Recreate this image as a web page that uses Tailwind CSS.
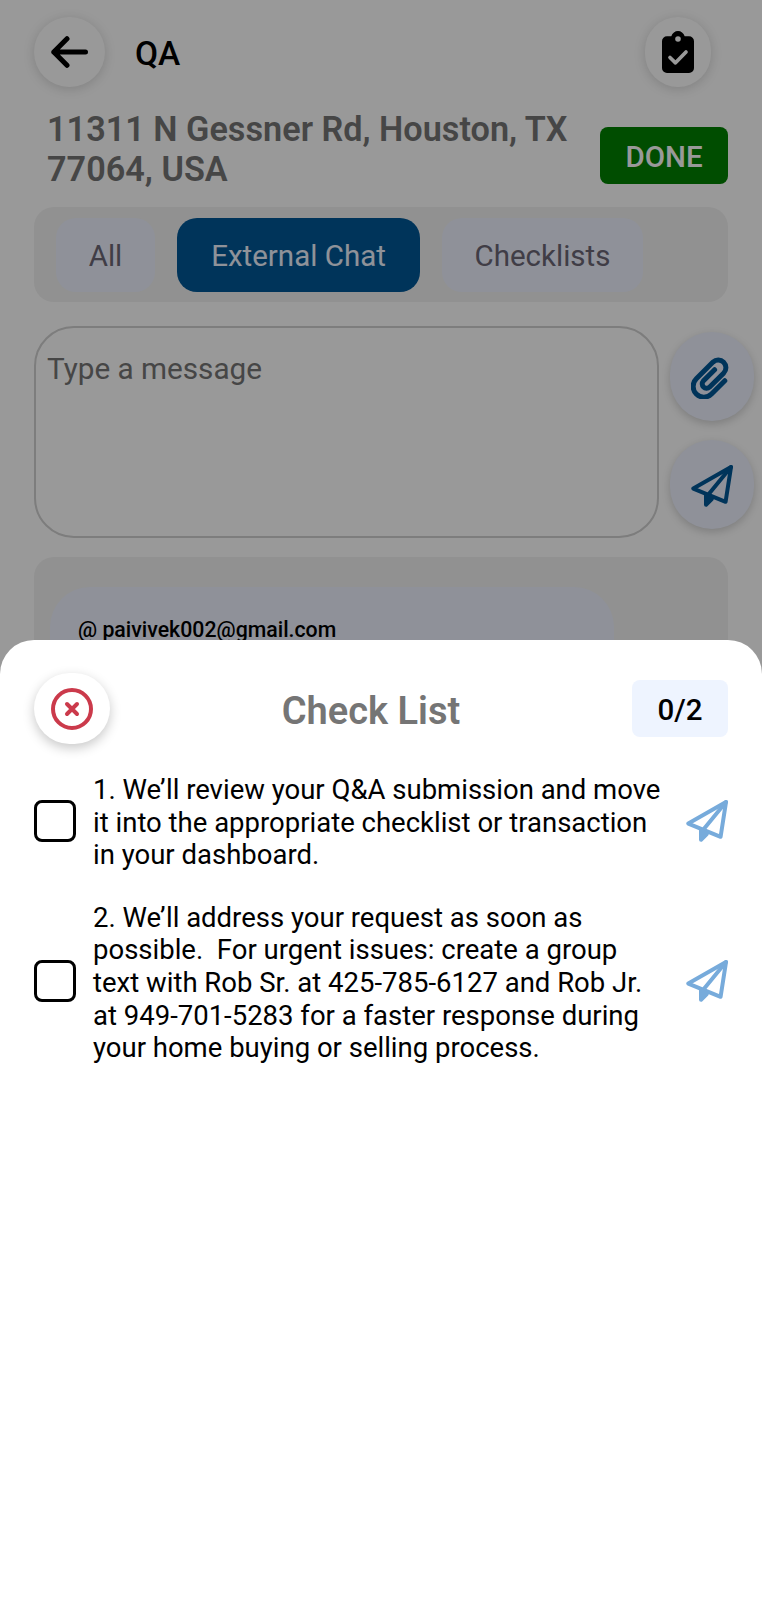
<!DOCTYPE html>
<html lang="en">
<head>
<meta charset="utf-8">
<title>QA</title>
<script src="https://cdn.jsdelivr.net/npm/@tailwindcss/browser@4"></script>
</head>
<body class="bg-white font-[Roboto,sans-serif]">
<svg class="hidden">
  <symbol id="plane" viewBox="0 0 42 42">
    <g fill="none" stroke="currentColor" stroke-width="4" stroke-linejoin="round" stroke-linecap="round">
      <path d="M40 2.100 2.300 23.600 34.600 36.800Z"/>
      <path d="M40 2.100 17 30"/>
      <path fill="currentColor" d="M15 30.500V39.800L20.800 34Z"/>
    </g>
  </symbol>
</svg>
<div class="relative h-[1600px] w-[762px] overflow-hidden">
  <header class="flex items-center px-[34px] pt-[17px]">
    <button class="flex h-[70px] w-[71px] items-center justify-center rounded-full bg-white shadow-[0_2px_12px_rgba(0,0,0,0.16)]">
      <svg class="h-[32px] w-[37px]" viewBox="0 0 37 32" fill="none" stroke="#000" stroke-width="5" stroke-linecap="round" stroke-linejoin="round"><path d="M34.500 16H2.800M16 2.700 2.800 16 16 29.300"/></svg>
    </button>
    <h1 class="ml-[30px] pt-[3px] text-[33.500px] font-medium leading-[40px] text-black">QA</h1>
    <button class="ml-auto mr-[17px] flex h-[70px] w-[66px] items-center justify-center rounded-full bg-white shadow-[0_2px_12px_rgba(0,0,0,0.16)]">
      <svg class="h-[42px] w-[32px]" viewBox="0 0 32 42"><path d="M5 5.300h4.300C10.500 2 13 0 16 0s5.500 2 6.700 5.300H27a5 5 0 0 1 5 5V37a5 5 0 0 1-5 5H5a5 5 0 0 1-5-5V10.300a5 5 0 0 1 5-5Z"/><circle cx="16" cy="8" r="2.800" fill="#fff"/><path d="m8 26.500 5.500 5.300L24 21" fill="none" stroke="#fff" stroke-width="3.700" stroke-linecap="round" stroke-linejoin="round"/></svg>
    </button>
  </header>

  <section class="mt-[21px] flex items-start justify-between pl-[47px] pr-[34px]">
    <p class="w-[540px] whitespace-nowrap pt-px text-[34.250px] font-semibold leading-[40px] text-[#757575]">11311 N Gessner Rd, Houston, TX<br>77064, USA</p>
    <button class="mt-[19px] h-[57px] w-[128px] rounded-lg bg-[#008000] pt-[4px] text-[29.500px] font-medium text-white">DONE</button>
  </section>

  <nav class="mx-[34px] mt-[18px] flex h-[95px] items-center gap-[22px] rounded-[20px] bg-[#f2f2f2] px-[22px] text-[29.500px] text-[#6b6675]">
    <button class="h-[74px] w-[99px] rounded-[20px] bg-[#eef2ff] pt-[4px]">All</button>
    <button class="h-[74px] w-[243px] rounded-[20px] bg-[#005796] pt-[4px] text-[#eef4ff]">External Chat</button>
    <button class="h-[74px] w-[201px] rounded-[20px] bg-[#eef2ff] pt-[4px]">Checklists</button>
  </nav>

  <section class="ml-[34px] mt-[24px] flex gap-[11px]">
    <div class="h-[212px] w-[625px] rounded-[40px] border-2 border-[#d0d0d0] pl-[11px] pt-[23px] text-[29.700px] leading-[36px] text-[#757575]">Type a message</div>
    <div class="flex flex-col gap-[19px] pt-[6px] text-[#005796]">
      <button class="flex h-[89px] w-[84px] items-center justify-center rounded-full bg-[#eef2ff] pt-[2px] shadow-[0_3px_8px_rgba(0,0,0,0.18)]">
        <svg class="h-[42px] w-[38px] -translate-x-0.5" viewBox="0 0 38 42" fill="none" stroke="currentColor" stroke-width="5" stroke-linecap="round"><path d="M33.800 23.700 20.500 37A10.700 10.700 0 0 1 5.300 21.800L22 5.100A7.640 7.640 0 0 1 32.800 15.900L18.500 30.200A4.400 4.400 0 0 1 12.300 24L23.600 12.700"/></svg>
      </button>
      <button class="flex h-[89px] w-[84px] items-center justify-center rounded-full bg-[#eef2ff] pt-[3px] shadow-[0_3px_8px_rgba(0,0,0,0.18)]">
        <svg class="size-[42px]"><use href="#plane"/></svg>
      </button>
    </div>
  </section>

  <section class="mx-[34px] mt-[19px] h-[400px] rounded-[20px] bg-[#f2f2f2] pl-[16px] pt-[30px]">
    <div class="h-[300px] w-[564px] rounded-[40px] bg-[#eef2ff] pl-[28px] pt-[29px] text-[21.300px] font-medium leading-[28px] text-black">@ paivivek002@gmail.com</div>
  </section>

  <div class="absolute inset-0 bg-black/40"></div>

  <main class="absolute inset-x-0 bottom-0 top-[640px] rounded-t-[34px] bg-white px-[34px] pt-[33px]">
    <div class="flex items-center justify-between">
      <button class="flex h-[71px] w-[76px] items-center justify-center rounded-[36px] bg-white shadow-[0_4px_12px_rgba(0,0,0,0.22)]">
        <svg class="size-[42px]" viewBox="0 0 42 42" fill="none" stroke="#cb3a4b" stroke-width="4" stroke-linecap="round"><circle cx="21" cy="21" r="19"/><path d="m16 16 10 10M26 16 16 26"/></svg>
      </button>
      <h2 class="pt-[4px] text-[38px] font-semibold leading-[44px] text-[#757575]">Check List</h2>
      <span class="flex h-[57px] w-[96px] items-center justify-center rounded-lg bg-[#eef4ff] pt-[4px] text-[29.500px] font-medium text-black">0/2</span>
    </div>
    <ul class="mt-[30px] flex flex-col gap-[30px] text-[27.500px] leading-[32.600px] text-black">
      <li class="flex items-center">
        <span class="mb-[3px] size-[42px] shrink-0 rounded-[8px] border-3 border-black"></span>
        <p class="ml-[17px] flex-1 whitespace-pre">1. We’ll review your Q&amp;A submission and move
it into the appropriate checklist or transaction
in your dashboard.</p>
        <svg class="mb-[4px] size-[42px] shrink-0 text-[#77abdb]"><use href="#plane"/></svg>
      </li>
      <li class="flex items-center">
        <span class="mb-[4px] size-[42px] shrink-0 rounded-[8px] border-3 border-black"></span>
        <p class="ml-[17px] flex-1 whitespace-pre">2. We’ll address your request as soon as
possible.  For urgent issues: create a group
text with Rob Sr. at 425-785-6127 and Rob Jr.
at 949-701-5283 for a faster response during
your home buying or selling process.</p>
        <svg class="mb-[4px] size-[42px] shrink-0 text-[#77abdb]"><use href="#plane"/></svg>
      </li>
    </ul>
  </main>
</div>
</body>
</html>
